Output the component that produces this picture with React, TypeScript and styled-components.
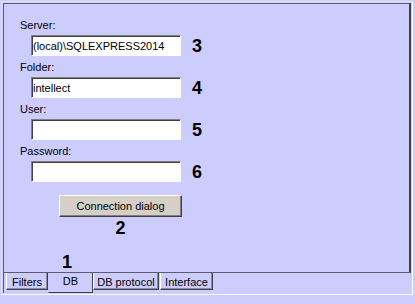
import React from 'react';
import styled, { createGlobalStyle } from 'styled-components';

const GlobalStyle = createGlobalStyle`
  body {
    margin: 0;
    background: #cdcdfd;
    font-family: "Liberation Sans", Arial, sans-serif;
  }
`;

const fields = [
  { label: 'Server:', value: '(local)\\SQLEXPRESS2014', mark: '3' },
  { label: 'Folder:', value: 'intellect', mark: '4' },
  { label: 'User:', value: '', mark: '5' },
  { label: 'Password:', value: '', mark: '6' },
];

const tabs = [
  { name: 'Filters', width: 42 },
  { name: 'DB', width: 45, active: true },
  { name: 'DB protocol', width: 66 },
  { name: 'Interface', width: 53 },
];

const App = () => {
  return (
    <>
      <GlobalStyle />
      <Frame>
        <Panel>
          {fields.map((f) => (
            <Field key={f.label}>
              <Label>{f.label}</Label>
              <Row>
                <Input type={f.label === 'Password:' ? 'password' : 'text'} defaultValue={f.value} />
                <Mark>{f.mark}</Mark>
              </Row>
            </Field>
          ))}
          <ButtonCol>
            <Button>Connection dialog</Button>
            <Mark>2</Mark>
          </ButtonCol>
          <TabMark>1</TabMark>
        </Panel>
        <TabStrip>
          {tabs.map((t) => (
            <Tab key={t.name} $width={t.width} $active={!!t.active}>
              {t.name}
            </Tab>
          ))}
        </TabStrip>
      </Frame>
    </>
  );
};

const Frame = styled.div`
  box-sizing: border-box;
  margin: 1px 0 0 1px;
  width: 412px;
  height: 294px;
  border: 1px solid #ffffff;
  border-top-color: #e4e4fc;
  border-left-color: #e4e4fc;
  padding: 1px 0 0 1px;
  display: flex;
  flex-direction: column;
`;

const Panel = styled.div`
  box-sizing: border-box;
  width: 408px;
  height: 270px;
  border: 1px solid #5c5c6c;
  border-right: 2px solid #404048;
  padding: 15px 0 1px 16px;
  display: flex;
  flex-direction: column;
`;

const Field = styled.div`
  display: flex;
  flex-direction: column;
  gap: 3px;

  & + & {
    margin-top: 5px;
  }
`;

const Label = styled.div`
  font-size: 11px;
  line-height: 13px;
  color: #000;
`;

const Row = styled.div`
  display: flex;
  align-items: center;
  gap: 11px;
  margin-left: 11px;
`;

const Input = styled.input`
  box-sizing: border-box;
  width: 150px;
  height: 21px;
  margin: 0;
  padding: 0 1px;
  background: #fff;
  border-style: solid;
  border-width: 1px;
  border-color: #808080 #ffffff #ffffff #808080;
  box-shadow: inset 1px 1px 0 #404040;
  font-family: "Liberation Sans", Arial, sans-serif;
  font-size: 11px;
  color: #000;
  outline: none;
`;

const Mark = styled.div`
  font-size: 18px;
  line-height: 18px;
  font-weight: bold;
  color: #000;
`;

const ButtonCol = styled.div`
  display: flex;
  flex-direction: column;
  align-items: center;
  gap: 2px;
  width: 123px;
  margin: 13px 0 0 39px;
`;

const Button = styled.button`
  box-sizing: border-box;
  width: 123px;
  height: 22px;
  margin: 0;
  padding: 0;
  background: #d4d0c8;
  border-style: solid;
  border-width: 1px;
  border-color: #ffffff #404040 #404040 #ffffff;
  box-shadow: inset -1px -1px 0 #808080;
  font-family: "Liberation Sans", Arial, sans-serif;
  font-size: 11px;
  color: #000;
`;

const TabMark = styled(Mark)`
  margin: auto 0 0 42px;
`;

const TabStrip = styled.div`
  display: flex;
  align-items: flex-start;
  height: 20px;
  border-left: 1px solid #5c5c6c;
  padding-left: 2px;
`;

const Tab = styled.div<{ $width: number; $active: boolean }>`
  box-sizing: border-box;
  width: ${(p) => p.$width}px;
  height: ${(p) => (p.$active ? 20 : 17)}px;
  padding-top: ${(p) => (p.$active ? 2 : 3)}px;
  border-left: 1px solid ${(p) => (p.$active ? 'transparent' : '#ffffff')};
  border-right: 1px solid #404048;
  border-bottom: 1px solid #404048;
  box-shadow: ${(p) => (p.$active ? 'none' : 'inset -1px -1px 0 #8a8aa0')};
  font-size: 11px;
  line-height: 13px;
  text-align: center;
  color: #000;
  white-space: nowrap;

  &:last-child {
    margin-left: 1px;
  }
`;

export default App;
